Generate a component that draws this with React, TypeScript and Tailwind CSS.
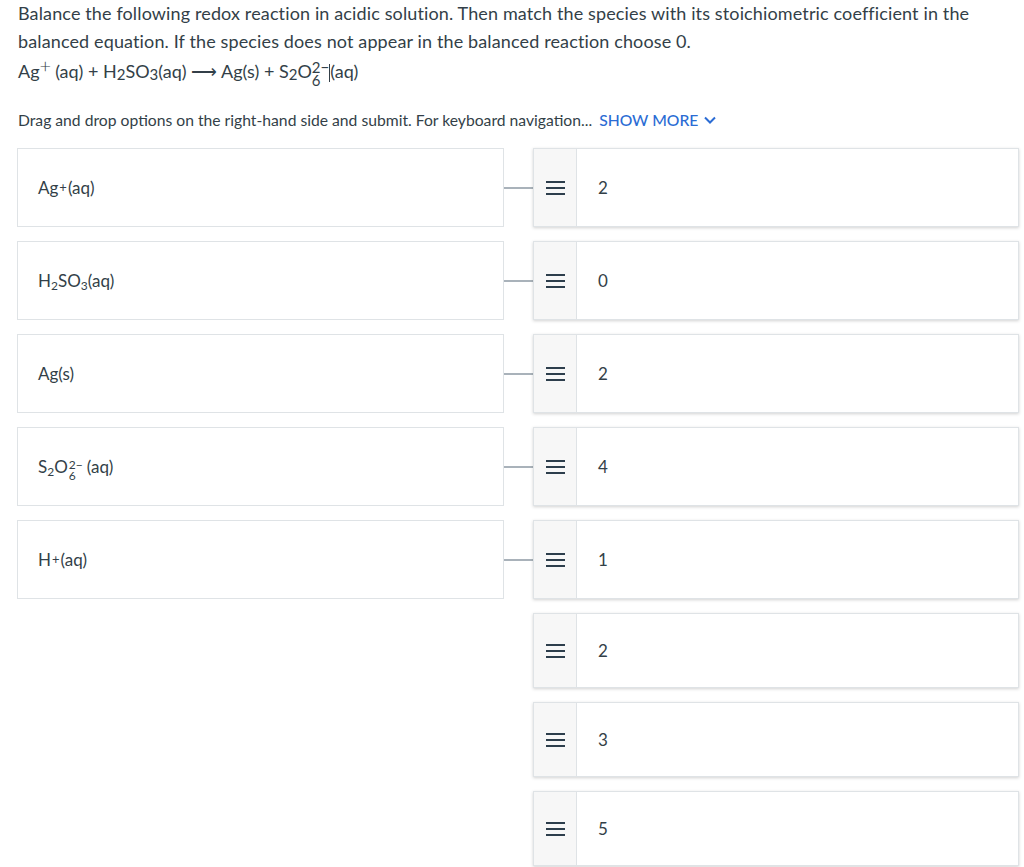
import { ReactNode } from "react";

const font = { fontFamily: '"Lato", "Liberation Sans", sans-serif' };

// stacked super/sub script, like S2O6 2-
function Stack({ sup, sub }: { sup: string; sub: string }) {
  return (
    <span className="inline-flex flex-col align-middle text-[12px] leading-[11px] mx-[1px] relative top-[1px]">
      <span>{sup}</span>
      <span>{sub}</span>
    </span>
  );
}

function Handle() {
  return (
    <div className="w-[43px] shrink-0 bg-[#f7f7f7] border-r border-[#dfe3e6] flex items-center justify-center">
      <div className="flex flex-col gap-[4px]">
        <span className="block w-[19px] h-[2px] bg-[#2d3e4c]" />
        <span className="block w-[19px] h-[2px] bg-[#2d3e4c]" />
        <span className="block w-[19px] h-[2px] bg-[#2d3e4c]" />
      </div>
    </div>
  );
}

function Answer({ value, tall }: { value: string; tall?: boolean }) {
  return (
    <div
      className={`flex-1 flex bg-white border border-[#dfe3e6] shadow-[0_1px_3px_rgba(0,0,0,0.18)] ${
        tall ? "h-[79px]" : "h-[75px]"
      }`}
    >
      <Handle />
      <div className="flex items-center pl-[21px] text-[17px] text-[#333f48]">{value}</div>
    </div>
  );
}

const species: { label: ReactNode; value: string }[] = [
  {
    label: (
      <>
        Ag<span className="text-[13px] relative -top-[2px] mx-[1px]">+</span>(aq)
      </>
    ),
    value: "2",
  },
  {
    label: (
      <>
        H<span className="text-[12px] relative top-[3px]">2</span>SO
        <span className="text-[12px] relative top-[3px]">3</span>(aq)
      </>
    ),
    value: "0",
  },
  { label: <>Ag(s)</>, value: "2" },
  {
    label: (
      <>
        S<span className="text-[12px] relative top-[3px]">2</span>O
        <Stack sup="2−" sub="6" />
        <span className="ml-[3px]">(aq)</span>
      </>
    ),
    value: "4",
  },
  {
    label: (
      <>
        H<span className="text-[13px] relative -top-[2px] mx-[1px]">+</span>(aq)
      </>
    ),
    value: "1",
  },
];

const extras = ["2", "3", "5"];

export default function App() {
  return (
    <div className="min-h-screen bg-white text-[#333f48] pl-[17px] pr-[5px] pt-px" style={font}>
      <p className="text-[18px] leading-[28px] pl-[1px] tracking-[0.13px] -mt-[2px]">
        Balance the following redox reaction in acidic solution. Then match the species with its stoichiometric
        coefficient in the
        <br />
        balanced equation. If the species does not appear in the balanced reaction choose 0.
      </p>
      <p className="text-[18px] leading-[28px] pl-[1px] mt-[1px]">
        Ag<span className="text-[20px] font-light relative -top-[5px] mr-[4px]">+</span>(aq) + H
        <span className="text-[15px] relative top-[2px]">2</span>SO
        <span className="text-[15px] relative top-[2px]">3</span>(aq) ⟶ Ag(s) + S
        <span className="text-[15px] relative top-[2px]">2</span>O
        <span className="inline-flex flex-col align-middle text-[15px] leading-[13px] relative top-[1px]">
          <span>2−</span>
          <span>6</span>
        </span>
        <span className="inline-block w-[1px] h-[18px] bg-[#333f48] align-middle" />
        (aq)
      </p>

      <div className="mt-[24px] text-[15.7px] leading-[20px] pl-[1px] flex items-center">
        <span>Drag and drop options on the right-hand side and submit. For keyboard navigation...</span>
        <span className="ml-[7px] text-[#2b6cd4] font-medium">SHOW MORE</span>
        <svg className="ml-[6px]" width="12" height="8" viewBox="0 0 12 8" fill="none">
          <path d="M1 1.5 6 6.5 11 1.5" stroke="#2b6cd4" strokeWidth="2" />
        </svg>
      </div>

      <div className="mt-[18px] flex flex-col gap-[14px]">
        {species.map((s, i) => (
          <div key={i} className="flex items-center">
            <div className="w-[487px] h-[79px] shrink-0 border border-[#dfe3e6] flex items-center pl-[20px] text-[17px]">
              <span>{s.label}</span>
            </div>
            <div className="w-[29px] h-[2px] bg-[#a9b2ba] shrink-0" />
            <Answer value={s.value} tall />
          </div>
        ))}
        {extras.map((v, i) => (
          <div key={"e" + i} className="flex pl-[516px]">
            <Answer value={v} />
          </div>
        ))}
      </div>
    </div>
  );
}
